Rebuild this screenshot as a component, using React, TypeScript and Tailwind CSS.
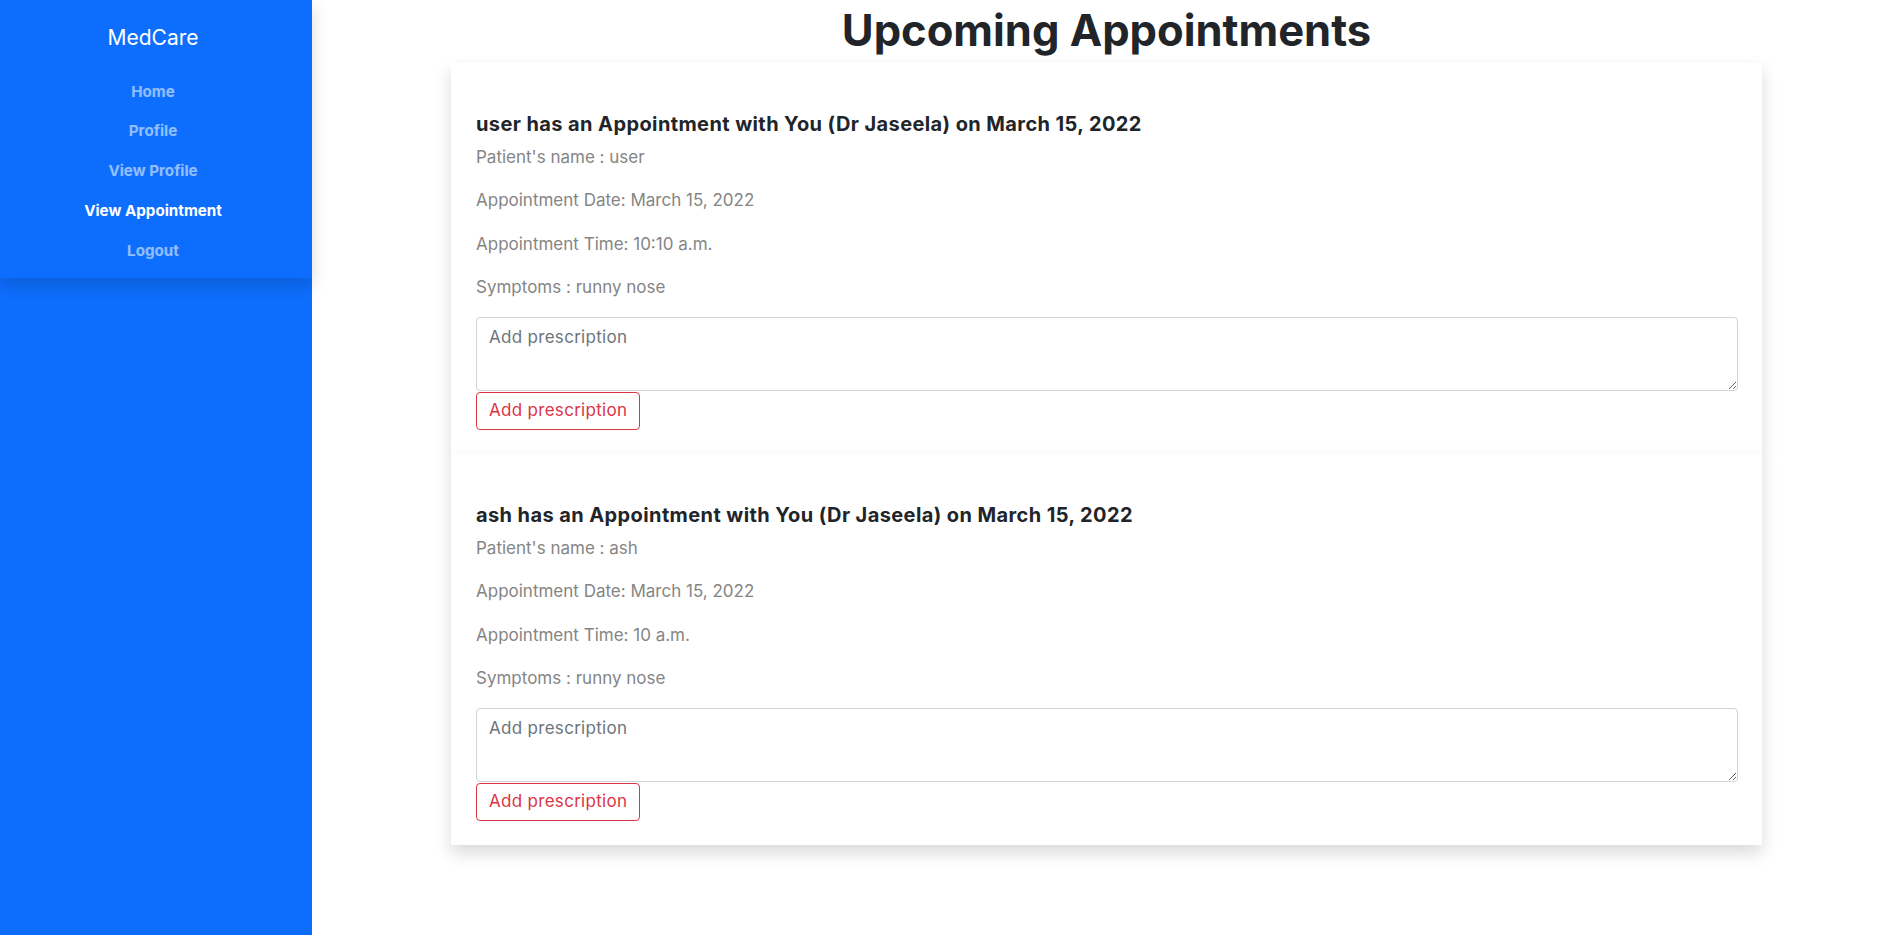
import React from "react";

type Appointment = {
  id: number;
  patient: string;
  date: string;
  time: string;
  symptoms: string;
};

const appointments: Appointment[] = [
  { id: 1, patient: "user", date: "March 15, 2022", time: "10:10 a.m.", symptoms: "runny nose" },
  { id: 2, patient: "ash", date: "March 15, 2022", time: "10 a.m.", symptoms: "runny nose" },
];

const navLinks = [
  { label: "Home", active: false },
  { label: "Profile", active: false },
  { label: "View Profile", active: false },
  { label: "View Appointment", active: true },
  { label: "Logout", active: false },
];

function Sidebar() {
  return (
    <aside className="w-[312px] shrink-0 min-h-screen bg-[#0d6efd]">
      <nav className="h-[278px] flex flex-col items-center pr-[6px] shadow-[0_0.5rem_1rem_rgba(0,0,0,0.15)]">
        <div className="pt-[25px] h-[71px] text-[21px] leading-[26px] text-white">MedCare</div>
        <ul className="flex flex-col items-center pt-[1px]">
          {navLinks.map((link) => (
            <li
              key={link.label}
              className={
                "h-[39.8px] flex items-center text-[15.2px] font-bold " +
                (link.active ? "text-white" : "text-white/55")
              }
            >
              {link.label}
            </li>
          ))}
        </ul>
      </nav>
    </aside>
  );
}

function AppointmentCard({ appt }: { appt: Appointment }) {
  return (
    <div className="relative bg-white h-[391px] pl-[25px] pr-[24px] pt-[49px] shadow-[0_0.5rem_1rem_rgba(0,0,0,0.15)]">
      <h3 className="text-[20px] leading-[24px] font-bold text-[#212529] tracking-[0.4px] mb-[8px]">
        {appt.patient} has an Appointment with You (Dr Jaseela) on {appt.date}
      </h3>
      <p className="text-[17px] leading-[26px] text-[#858585] mb-[17.4px]">Patient's name : {appt.patient}</p>
      <p className="text-[17px] leading-[26px] text-[#858585] mb-[17.4px]">Appointment Date: {appt.date}</p>
      <p className="text-[17px] leading-[26px] text-[#858585] mb-[17.4px]">Appointment Time: {appt.time}</p>
      <p className="text-[17px] leading-[26px] text-[#858585] mb-[17px]">Symptoms : {appt.symptoms}</p>
      <textarea
        placeholder="Add prescription"
        className="block w-full h-[74px] border border-[#ced4da] rounded-[4px] px-[12px] py-[6px] text-[17px] tracking-[0.3px] leading-[26px] text-[#212529] placeholder:text-[#6c757d]"
      />
      <button className="mt-[1px] h-[38px] px-[12px] border border-[#dc3545] rounded-[4px] text-[17px] tracking-[0.3px] text-[#dc3545] bg-white">
        Add prescription
      </button>
    </div>
  );
}

export default function App() {
  return (
    <div className="flex min-h-screen bg-white font-['Inter',sans-serif]">
      <Sidebar />
      <main className="flex-1 pl-[12px]">
        <div className="w-[1311px] mx-auto">
          <h1 className="pt-[6px] mb-[9px] text-[43.5px] leading-[48px] font-bold text-center text-[#212529]">
            Upcoming Appointments
          </h1>
          {appointments.map((appt) => (
            <AppointmentCard key={appt.id} appt={appt} />
          ))}
        </div>
      </main>
    </div>
  );
}
